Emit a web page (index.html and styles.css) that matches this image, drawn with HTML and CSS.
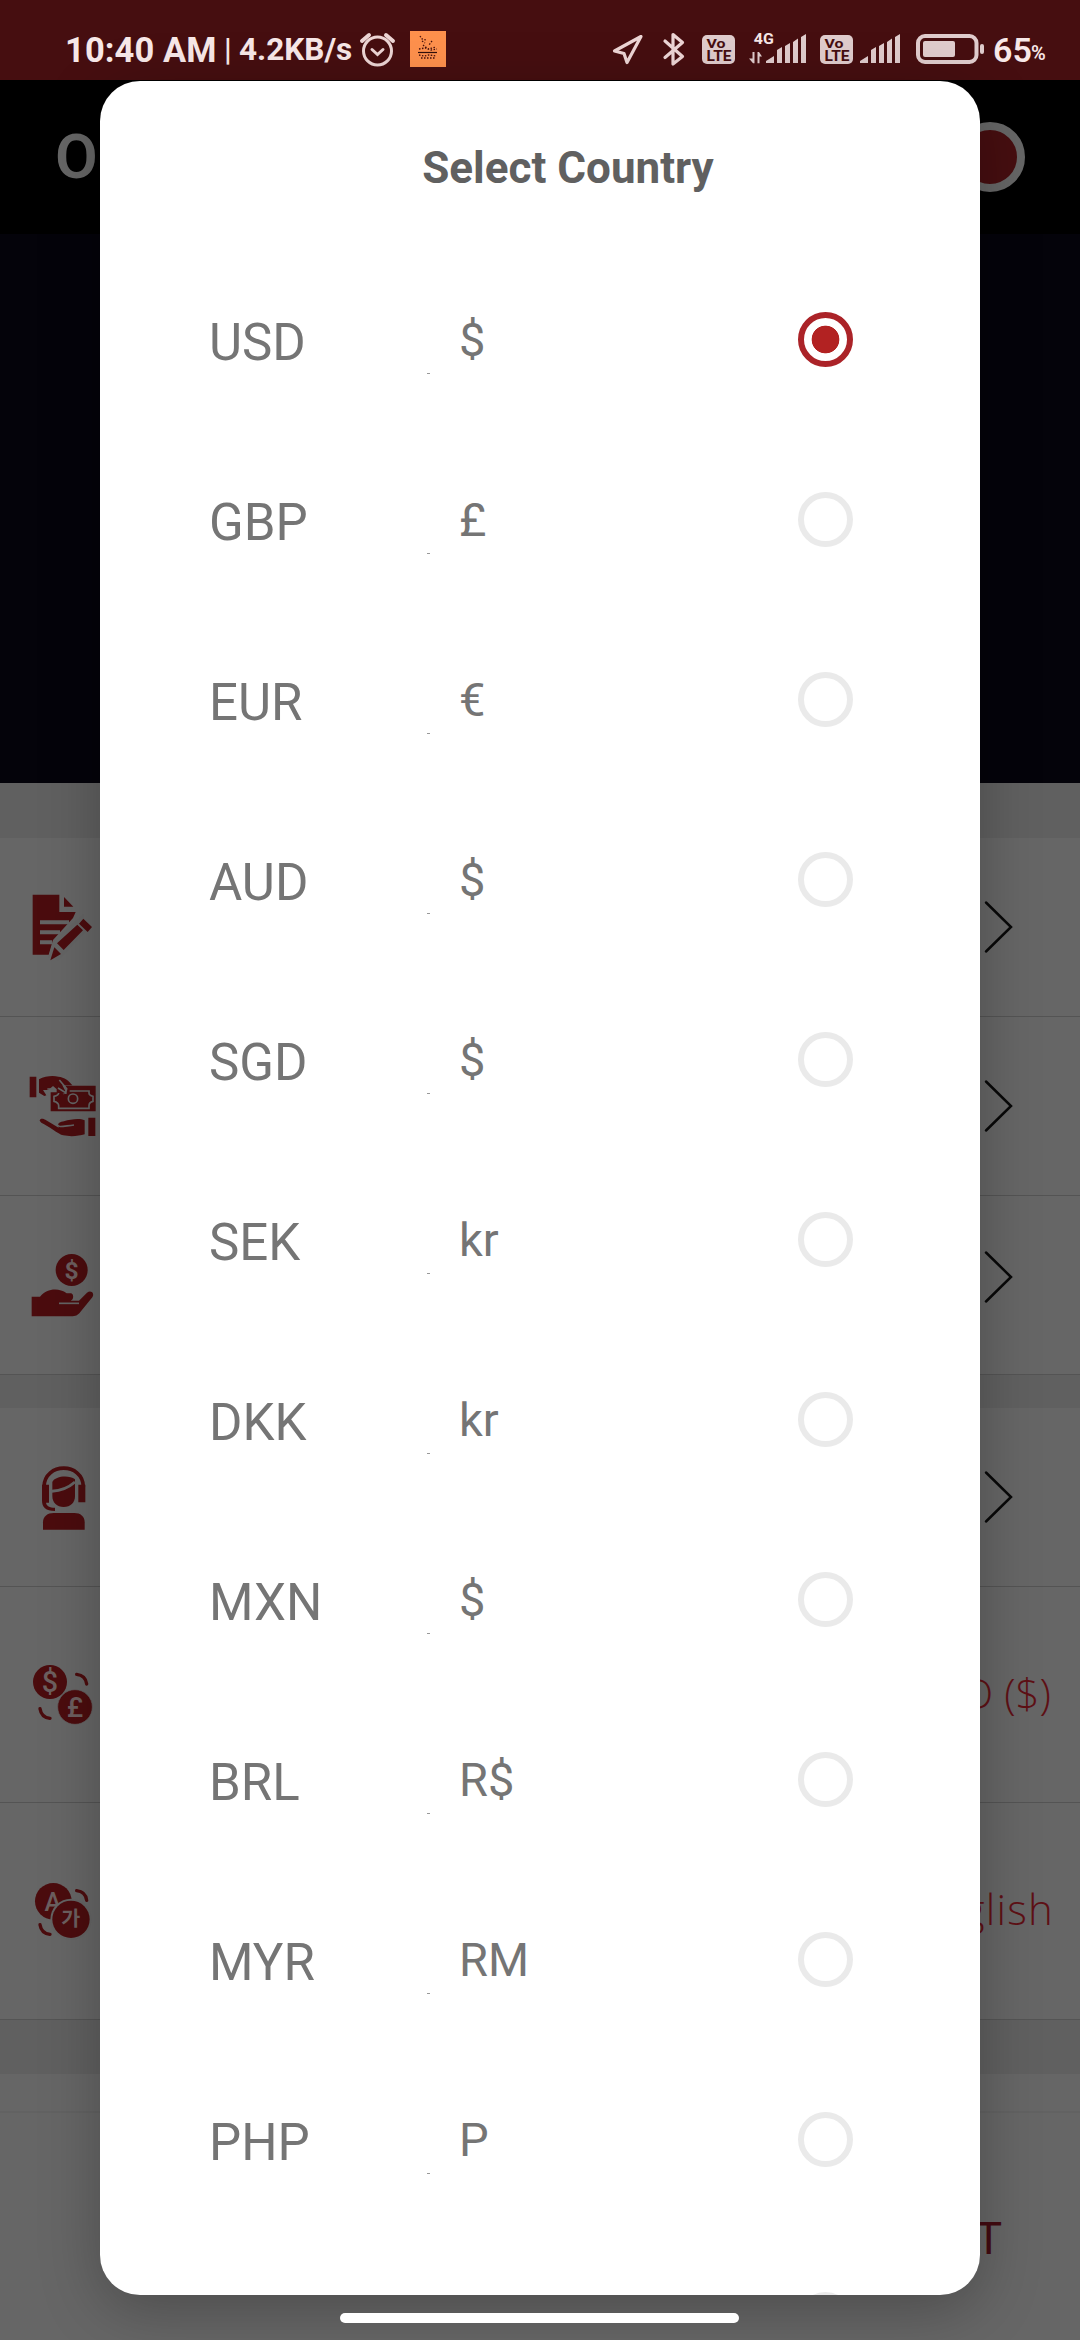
FILE: index.html
```html
<!DOCTYPE html>
<html lang="en">
<head>
<meta charset="utf-8">
<title>Select Country</title>
<link rel="stylesheet" href="styles.css">
</head>
<body>
<div class="screen">
  <header class="status">
    <span class="time">10:40 AM</span>
    <span class="bar">|</span>
    <span class="rate">4.2KB/s</span>
    <svg class="ic" width="40" height="80" viewBox="358 0 40 80" fill="none" stroke="#edd5d5" stroke-linecap="round"><circle cx="377.5" cy="51" r="14" stroke-width="3"/><path d="M372 49.500l5.500 5 5.500-5" stroke-width="3"/><path d="M362 41l7-6M393 41l-7-6" stroke-width="4"/></svg>
    <svg class="ic note" width="36" height="36" viewBox="0 0 36 36"><path fill="#ff914d" d="M0 0h36v36H0z"/><path stroke="#46100c" stroke-width="1.300" fill="none" stroke-dasharray="1.500 1.500" d="M10 5l2 3 4 1M12 10l3 2M22 10l-3 4M13 14l5 4 8-2M9 18l6-1 6 2 6-1M9 24l5 1 5-1 7 1M11 27h15"/><path stroke="#30100c" stroke-width="1.200" d="M8 21.500h19"/></svg>
    <span class="grow"></span>
    <svg class="ic" width="50" height="80" viewBox="606 0 50 80" fill="none" stroke="#edd5d5" stroke-width="3.200" stroke-linejoin="round"><path d="M641 36.500L614.500 51l9.500 2.500 3 9z"/></svg>
    <svg class="ic" width="38" height="80" viewBox="656 0 38 80" fill="none" stroke="#edd5d5" stroke-width="3.200" stroke-linecap="round" stroke-linejoin="round"><path d="M665 41l17.500 15.500-9.500 7.500V34.500l9.500 8L665 57.500"/></svg>
    <svg class="ic" width="50" height="80" viewBox="694 0 50 80"><rect x="702" y="35" width="33" height="29" rx="5" fill="#e0cccd"/><g fill="#460e10" class="tiny"><text x="706.500" y="47.500" font-size="13.500" textLength="19" lengthAdjust="spacingAndGlyphs">Vo</text><text x="706.500" y="60.800" font-size="14" textLength="25" lengthAdjust="spacingAndGlyphs">LTE</text></g></svg>
    <svg class="ic" width="68" height="80" viewBox="744 0 68 80" fill="#e0cccd"><text class="tiny" x="753.800" y="44.200" font-size="15.500" textLength="20" lengthAdjust="spacingAndGlyphs" fill="#f6e6e6">4G</text><path d="M749 58.500h3.500V52h2v11.200h-1.500zM757.500 63.200V52h1.500l3 4.500h-2.500v6.700zM766 63v-2l8-5v7zM777 50l5-3v16h-5zM785 46l5-3v20h-5zM793 42l5-3.500V63h-5zM801 37l5-3v29h-5z"/></svg>
    <svg class="ic" width="46" height="80" viewBox="812 0 46 80"><rect x="820" y="35" width="33" height="29" rx="5" fill="#e0cccd"/><g fill="#460e10" class="tiny"><text x="824.500" y="47.500" font-size="13.500" textLength="19" lengthAdjust="spacingAndGlyphs">Vo</text><text x="824.500" y="60.800" font-size="14" textLength="25" lengthAdjust="spacingAndGlyphs">LTE</text></g></svg>
    <svg class="ic" width="48" height="80" viewBox="858 0 48 80" fill="#e0cccd"><path d="M860 63v-2l8-5v7zM871 50l5-3v16h-5zM879 46l5-3v20h-5zM887 42l5-3.500V63h-5zM895 37l5-3v29h-5z"/></svg>
    <svg class="ic" width="86" height="80" viewBox="906 0 86 80"><rect x="918" y="36" width="58.500" height="26" rx="7" fill="none" stroke="#e0cccd" stroke-width="4"/><rect x="923" y="41" width="32" height="16" rx="2" fill="#e0cccd"/><rect x="980" y="44" width="4" height="10" rx="2" fill="#e0cccd"/></svg>
    <span class="pct">65</span><span class="pcs">%</span>
  </header>

  <div class="topbar"><span class="brand">O</span><span class="avatar"></span></div>
  <div class="hero"></div>
  <div class="band b1"></div>

  <main class="rows">
    <div class="row">
      <svg class="ri" viewBox="0 -126 240 534"><path d="M38 44h80v52h49l-8 18-60 66-13 44H38z"/><path d="M132 51l28 29h-28z"/><g class="cut"><path d="M60 127h87M60 157h60M60 187h36" stroke-width="12"/><path d="M190 103L100 184l-14 48 30 8 80-84z" stroke="none" fill="#646464"/></g><path d="M172 134l17 17-58 59-20-20zM190 116l26 25-13 15-26-25zM103 202l20 20-32 19z"/></svg>
      <svg class="chev" viewBox="0 0 30 54"><path d="M2 2.500l25 24.500L2 51.500"/></svg>
    </div>
    <div class="row">
      <svg class="ri" viewBox="0 411 240 534"><path d="M29 590h20v62H29zM205 713h21v55h-21zM57 598c18-10 42-12 58-8 18 2 32 12 42 26h-30l12 22-12 4-28-24-14 12-16 0 10 16-6 2-16-10zM92 637h18l0-14 20 20 10-2-4-24h91v77H92z"/><path class="cut" stroke-width="5" d="M118 600l22 26-3 12-23-14M82 627h18M116 639c0 6-6 8-14 10v15c8 2 14 5 14 13v8h91v-8c0-8 4-11 12-13v-15c-8-2-12-4-12-10v-6h-58"/><circle class="cut" cx="159" cy="656" r="14" stroke-width="5"/><path d="M59 722c1-9 12-6 17-3l40 24c-6-16 6-17 16-19 20-6 46-10 62-3v42c-18 6-46 7-64 3-16-4-44-28-66-38z"/><path class="cut" stroke-width="5" d="M113 735c4 8 14 4 49 0"/></svg>
      <svg class="chev" viewBox="0 0 30 54"><path d="M2 2.500l25 24.500L2 51.500"/></svg>
    </div>
    <div class="row up">
      <svg class="ri" viewBox="0 948 240 534"><circle cx="155" cy="1170" r="48"/><path d="M35 1250h25c20-24 55-28 80-10h12c10 0 10 20 0 22h25l24-24c12-10 24 2 16 14l-36 44c-8 10-14 13-28 13H35z"/><path class="cut" stroke-width="5" d="M117 1270h60"/><text x="155" y="1196" font-size="74" class="sym bold">$</text></svg>
      <svg class="chev" viewBox="0 0 30 54"><path d="M2 2.500l25 24.500L2 51.500"/></svg>
    </div>
    <div class="band b2"></div>
    <div class="row">
      <svg class="ri" viewBox="0 -126 240 534"><path d="M69 239v-22c0-18 14-28 32-28h62c18 0 31 10 31 28v22z"/><path d="M97 96c8-18 50-22 68-8v50c0 20-14 33-34 33s-34-13-34-33z"/><path class="cut" stroke-width="9" d="M95 124c30-2 52-12 70-28"/><path d="M72 110C74 36 188 36 190 110" fill="none" stroke="#4b0c0e" stroke-width="11"/><path d="M66 104h21v54H78c2 10 10 15 27 15v10c-28 0-39-10-39-32zM175 104h21v53h-21z"/></svg>
      <svg class="chev" viewBox="0 0 30 54"><path d="M2 2.500l25 24.500L2 51.500"/></svg>
    </div>
    <div class="row tall">
      <svg class="ri" viewBox="0 411 240 645"><circle cx="90" cy="696" r="51"/><circle cx="165" cy="771" r="52" stroke="#646464" stroke-width="2"/><path class="arc" d="M170 673q27 3 30 29M60 776q4 26 30 29"/><text x="90" y="726" font-size="86" class="sym">$</text><text x="165" y="800" font-size="84" class="sym">£</text></svg>
      <span class="val">D ($)</span>
    </div>
    <div class="row tall last">
      <svg class="ri" viewBox="0 1059 240 648"><circle cx="100" cy="1354" r="55"/><text x="99" y="1384" font-size="76" class="sym">A</text><circle cx="153" cy="1408" r="62" fill="#646464" class="halo"/><circle cx="153" cy="1408" r="56"/><path class="arc" d="M170 1322q27 3 30 29M60 1424q4 26 30 29"/><text x="152" y="1429" font-size="62" class="sym kr">가</text></svg>
      <span class="val eng">glish</span>
    </div>
    <div class="band b3"></div>
    <div class="strip"></div>
    <div class="foot"><span class="out">T</span></div>
  </main>

  <section class="modal">
    <h1 class="title">Select Country</h1>
    <ul class="list">
      <li class="opt"><span class="code">USD</span><i class="dot"></i><span class="cur">$</span><b class="radio on"></b></li>
      <li class="opt"><span class="code">GBP</span><i class="dot"></i><span class="cur">£</span><b class="radio"></b></li>
      <li class="opt"><span class="code">EUR</span><i class="dot"></i><span class="cur">€</span><b class="radio"></b></li>
      <li class="opt"><span class="code">AUD</span><i class="dot"></i><span class="cur">$</span><b class="radio"></b></li>
      <li class="opt"><span class="code">SGD</span><i class="dot"></i><span class="cur">$</span><b class="radio"></b></li>
      <li class="opt"><span class="code">SEK</span><i class="dot"></i><span class="cur">kr</span><b class="radio"></b></li>
      <li class="opt"><span class="code">DKK</span><i class="dot"></i><span class="cur">kr</span><b class="radio"></b></li>
      <li class="opt"><span class="code">MXN</span><i class="dot"></i><span class="cur">$</span><b class="radio"></b></li>
      <li class="opt"><span class="code">BRL</span><i class="dot"></i><span class="cur">R$</span><b class="radio"></b></li>
      <li class="opt"><span class="code">MYR</span><i class="dot"></i><span class="cur">RM</span><b class="radio"></b></li>
      <li class="opt"><span class="code">PHP</span><i class="dot"></i><span class="cur">P</span><b class="radio"></b></li>
      <li class="opt"><span class="code"></span><i class="dot"></i><span class="cur"></span><b class="radio"></b></li>
    </ul>
  </section>
  <div class="home"></div>
</div>
</body>
</html>
```
FILE: styles.css
```css
* { box-sizing: border-box; }
body { margin: 0; font-family: Roboto, "Noto Sans", sans-serif; }
.screen { position: relative; width: 1080px; height: 2340px; overflow: hidden; background: #666; }

.status { display: flex; align-items: center; height: 80px; padding-left: 65px; background: #460e10; color: #f8e8e8; white-space: nowrap; }
.ic { display: block; flex: none; }
.status span { line-height: 40px; margin-top: 20px; flex: none; }
.status .time { width: 159px; font-size: 34.5px; font-weight: 700; letter-spacing: .1px; }
.status .bar { width: 15px; font-size: 31px; font-weight: 500; }
.status .rate { width: 119px; font-size: 31.5px; font-weight: 700; }
.note { margin: 18px 0 0 12px; }
.status .grow { flex: 1; }
.status .pct { width: 38px; font-size: 34px; font-weight: 600; margin-left: 1px; }
.status .pcs { width: 49px; font-size: 20px; font-weight: 600; padding-top: 6px; }
.tiny { font-family: Roboto, sans-serif; font-weight: 700; }

.topbar { display: flex; align-items: center; justify-content: space-between; height: 154px; padding: 0 55px 0 55px; background: #000; }
.brand { font-size: 62px; font-weight: 600; line-height: 70px; color: #666; }
.avatar { width: 70px; height: 70px; border: 8px solid #666; border-radius: 50%; background: #460e10; }
.hero { height: 549px; background: #04030a; }
.band { background: #606060; }
.b1 { height: 55px; }
.b2 { height: 33px; }
.b3 { height: 54px; }

.row { display: flex; align-items: center; justify-content: space-between; height: 179px; padding: 0 66px 0 20px; border-bottom: 1px solid #545454; }
.tall { height: 216px; padding-right: 29px; }
.last { height: 217px; }
.ri { flex: none; width: 80px; height: 100%; fill: #4b0c0e; }
.cut { fill: none; stroke: #646464; }
.cut path { stroke: #646464; }
.arc { fill: none; stroke: #4b0c0e; stroke-width: 10; stroke-linecap: round; }
.sym { fill: #6c5f5f; font-weight: 500; text-anchor: middle; }
.bold { font-weight: 700; }
.kr { font-family: "Noto Sans CJK KR", sans-serif; font-weight: 700; }
.chev { flex: none; width: 30px; height: 54px; fill: none; stroke: #080808; stroke-width: 2.5; stroke-linecap: round; }
.up .chev { margin-bottom: 16px; }
.val { padding-bottom: 5px; font-family: "Open Sans", "Noto Sans", sans-serif; font-weight: 300; font-size: 42px; color: #5e1015; white-space: nowrap; }
.eng { letter-spacing: 1.2px; margin-right: -3px; }
.strip { height: 39px; border-bottom: 2px solid #626262; }
.foot { display: flex; justify-content: flex-end; padding: 99px 78px 0 0; }
.out { font-size: 45px; line-height: 53px; color: #420a10; }

.modal { position: absolute; left: 100px; top: 81px; width: 880px; height: 2214px; overflow: hidden; background: #fff; border-radius: 40px; box-shadow: 0 14px 60px rgba(0, 0, 0, .26); }
.title { margin: 0; height: 169px; padding: 57px 0 0 56px; text-align: center; font-size: 44px; line-height: 60px; font-weight: 700; color: #606060; }
.list { margin: 0; padding: 0; list-style: none; }
.opt { display: grid; grid-template-columns: 218px 32px 339px 56px; align-items: center; height: 180px; padding-left: 109px; color: #757575; }
.code { font-size: 51px; line-height: 60px; padding-top: 5px; }
.dot { width: 3px; height: 1px; margin-top: 67px; background: #999; }
.cur { font-size: 47px; line-height: 56px; }
.radio { width: 55px; height: 55px; margin-top: -1px; border: 6px solid #eaeaea; border-radius: 50%; }
.on { border-color: #ab2328; background: radial-gradient(circle, #b22222 13.5px, transparent 14.2px); }
.home { position: absolute; left: 340px; top: 2313px; width: 399px; height: 10px; border-radius: 5px; background: #fff; }
```
